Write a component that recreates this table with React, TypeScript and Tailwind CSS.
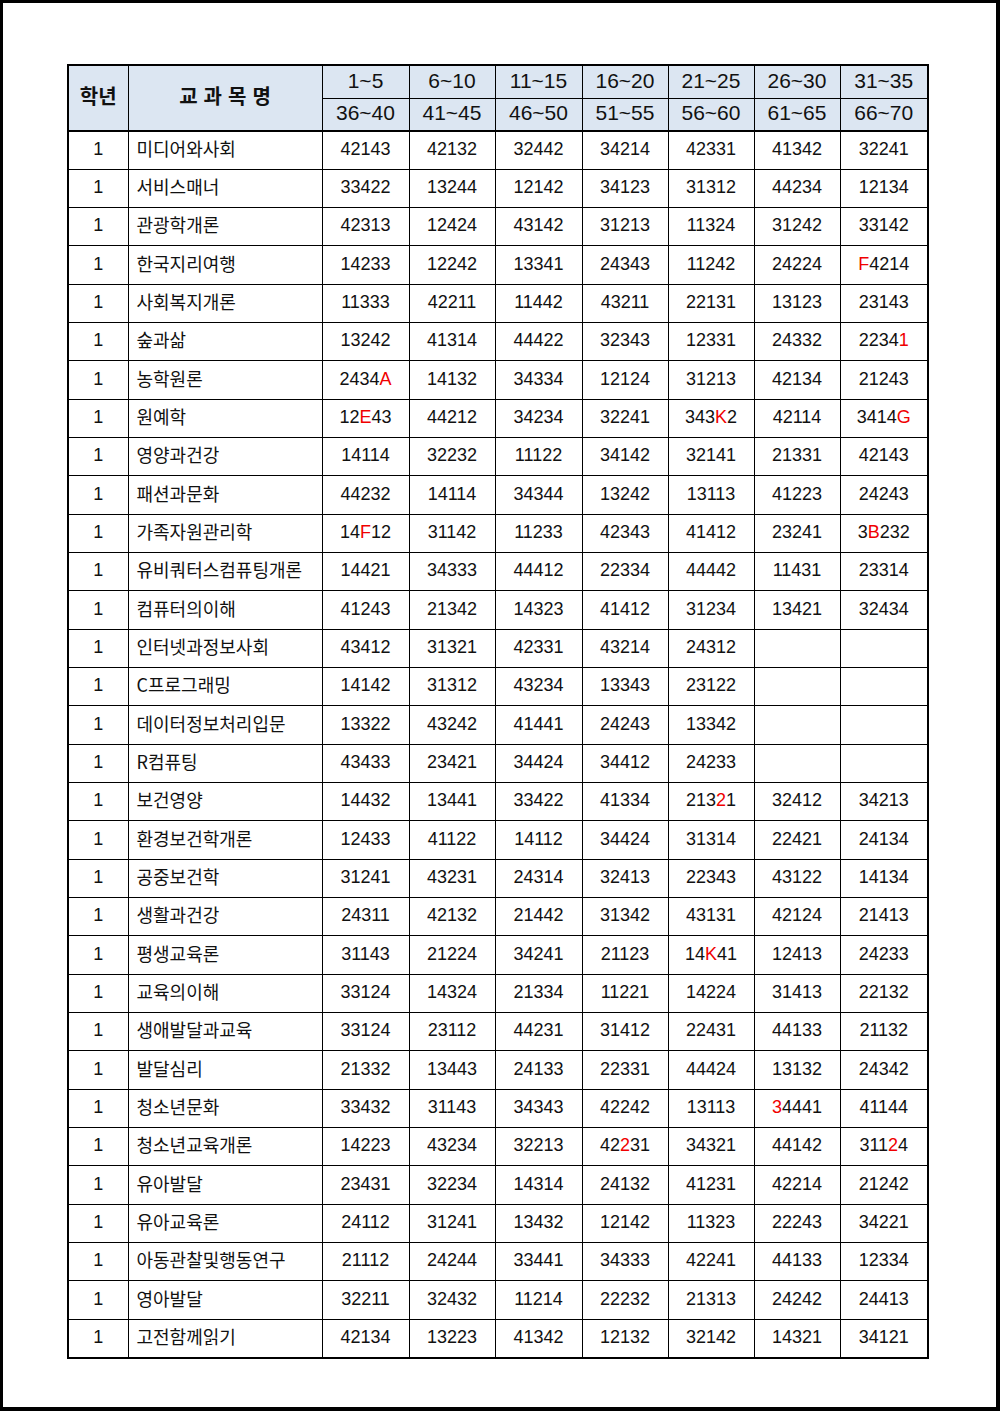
import React from 'react';

const ranges1 = ['1~5', '6~10', '11~15', '16~20', '21~25', '26~30', '31~35'];
const ranges2 = ['36~40', '41~45', '46~50', '51~55', '56~60', '61~65', '66~70'];

// red parts of an answer are wrapped in *
const rows: [string, string[]][] = [
  ['미디어와사회', ['42143', '42132', '32442', '34214', '42331', '41342', '32241']],
  ['서비스매너', ['33422', '13244', '12142', '34123', '31312', '44234', '12134']],
  ['관광학개론', ['42313', '12424', '43142', '31213', '11324', '31242', '33142']],
  ['한국지리여행', ['14233', '12242', '13341', '24343', '11242', '24224', '*F*4214']],
  ['사회복지개론', ['11333', '42211', '11442', '43211', '22131', '13123', '23143']],
  ['숲과삶', ['13242', '41314', '44422', '32343', '12331', '24332', '2234*1*']],
  ['농학원론', ['2434*A*', '14132', '34334', '12124', '31213', '42134', '21243']],
  ['원예학', ['12*E*43', '44212', '34234', '32241', '343*K*2', '42114', '3414*G*']],
  ['영양과건강', ['14114', '32232', '11122', '34142', '32141', '21331', '42143']],
  ['패션과문화', ['44232', '14114', '34344', '13242', '13113', '41223', '24243']],
  ['가족자원관리학', ['14*F*12', '31142', '11233', '42343', '41412', '23241', '3*B*232']],
  ['유비쿼터스컴퓨팅개론', ['14421', '34333', '44412', '22334', '44442', '11431', '23314']],
  ['컴퓨터의이해', ['41243', '21342', '14323', '41412', '31234', '13421', '32434']],
  ['인터넷과정보사회', ['43412', '31321', '42331', '43214', '24312', '', '']],
  ['C프로그래밍', ['14142', '31312', '43234', '13343', '23122', '', '']],
  ['데이터정보처리입문', ['13322', '43242', '41441', '24243', '13342', '', '']],
  ['R컴퓨팅', ['43433', '23421', '34424', '34412', '24233', '', '']],
  ['보건영양', ['14432', '13441', '33422', '41334', '213*2*1', '32412', '34213']],
  ['환경보건학개론', ['12433', '41122', '14112', '34424', '31314', '22421', '24134']],
  ['공중보건학', ['31241', '43231', '24314', '32413', '22343', '43122', '14134']],
  ['생활과건강', ['24311', '42132', '21442', '31342', '43131', '42124', '21413']],
  ['평생교육론', ['31143', '21224', '34241', '21123', '14*K*41', '12413', '24233']],
  ['교육의이해', ['33124', '14324', '21334', '11221', '14224', '31413', '22132']],
  ['생애발달과교육', ['33124', '23112', '44231', '31412', '22431', '44133', '21132']],
  ['발달심리', ['21332', '13443', '24133', '22331', '44424', '13132', '24342']],
  ['청소년문화', ['33432', '31143', '34343', '42242', '13113', '*3*4441', '41144']],
  ['청소년교육개론', ['14223', '43234', '32213', '42*2*31', '34321', '44142', '311*2*4']],
  ['유아발달', ['23431', '32234', '14314', '24132', '41231', '42214', '21242']],
  ['유아교육론', ['24112', '31241', '13432', '12142', '11323', '22243', '34221']],
  ['아동관찰및행동연구', ['21112', '24244', '33441', '34333', '42241', '44133', '12334']],
  ['영아발달', ['32211', '32432', '11214', '22232', '21313', '24242', '24413']],
  ['고전함께읽기', ['42134', '13223', '41342', '12132', '32142', '14321', '34121']],
];

const Answer = ({ value }: { value: string }) => (
  <>
    {value.split('*').map((part, i) =>
      i % 2 === 1 ? (
        <span key={i} className="text-[#f00000]">{part}</span>
      ) : (
        <span key={i}>{part}</span>
      )
    )}
  </>
);

export default function App() {
  return (
    <div className="w-[1000px] h-[1411px] bg-white border-l-[3px] border-t-[3px] border-r-4 border-b-4 border-black pl-[64px] pt-[61px]">
      <table
        className="w-[860px] table-fixed border-collapse border-2 border-black text-[#111]"
        style={{ fontFamily: '"Liberation Sans", "Noto Sans CJK KR", sans-serif' }}
      >
        <colgroup>
          <col className="w-[60px]" />
          <col className="w-[194px]" />
          <col className="w-[87px]" />
          <col className="w-[86px]" />
          <col className="w-[87px]" />
          <col className="w-[86px]" />
          <col className="w-[86px]" />
          <col className="w-[86px]" />
          <col className="w-[88px]" />
        </colgroup>
        <thead className="bg-[#dce6f2]">
          <tr className="h-[33px]">
            <th
              rowSpan={2}
              className="border border-black border-b-2 pb-1 text-[20px] font-bold"
              style={{ fontFamily: '"Noto Sans CJK KR", sans-serif' }}
            >
              학년
            </th>
            <th
              rowSpan={2}
              className="border border-black border-b-2 pb-1 pl-[6px] text-[20px] font-bold tracking-[6px]"
              style={{ fontFamily: '"Noto Sans CJK KR", sans-serif' }}
            >
              교과목명
            </th>
            {ranges1.map((r) => (
              <th key={r} className="border border-black pb-[3px] text-[21px] font-normal leading-none">
                {r}
              </th>
            ))}
          </tr>
          <tr className="h-[33px]">
            {ranges2.map((r) => (
              <th key={r} className="border border-black border-b-2 pb-[3px] text-[21px] font-normal leading-none">
                {r}
              </th>
            ))}
          </tr>
        </thead>
        <tbody>
          {rows.map(([name, answers]) => (
            <tr key={name} className="h-[38.34px]">
              <td className="border border-black pb-[2px] text-center text-[18px]">1</td>
              <td
                className="border border-black pl-2 pb-[4px] text-[18px] whitespace-nowrap"
                style={{ fontFamily: '"Noto Sans CJK KR", sans-serif' }}
              >
                {name}
              </td>
              {answers.map((a, i) => (
                <td key={i} className="border border-black pb-[2px] text-center text-[18px]">
                  <Answer value={a} />
                </td>
              ))}
            </tr>
          ))}
        </tbody>
      </table>
    </div>
  );
}
